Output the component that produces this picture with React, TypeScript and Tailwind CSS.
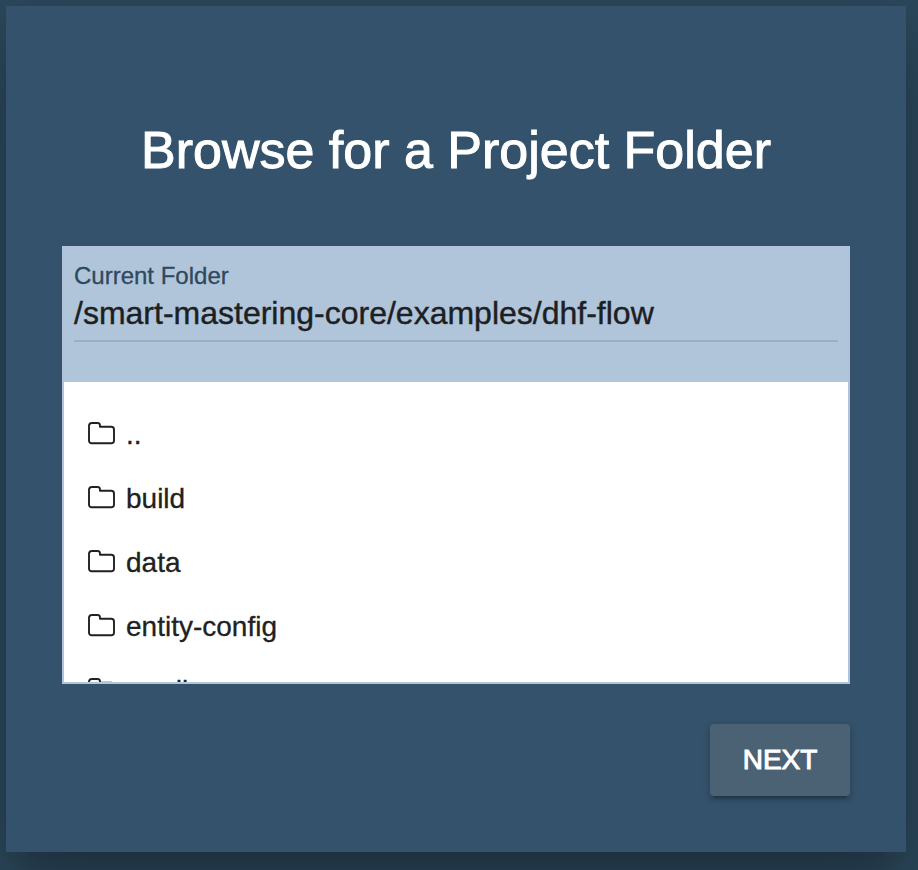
const folders = ['..', 'build', 'data', 'entity-config', 'gradle'];

function FolderIcon() {
  return (
    <svg width="28" height="24" viewBox="0 0 28 24" fill="none" stroke="#212121" strokeWidth="1.9" className="mb-0.5 shrink-0" aria-hidden="true">
      <path d="M1 19V4.8Q1 2 3.8 2H9.4Q12 2 12 4.4V5.8H23.2Q26 5.8 26 8.6V19.4Q26 22.2 23.2 22.2H3.8Q1 22.2 1 19.4Z" strokeLinejoin="round" />
    </svg>
  );
}

export default function App() {
  return (
    <div className="h-[870px] w-[918px] overflow-hidden bg-[#2d495d] pt-1.5 pl-1.5 font-['Liberation_Sans',Arial,sans-serif]">
      <main className="flex h-[846px] w-[900px] flex-col bg-[#34526b] px-14 shadow-[0_22px_30px_-14px_rgba(0,0,0,0.2),0_48px_76px_6px_rgba(0,0,0,0.14),0_18px_92px_16px_rgba(0,0,0,0.12)]">
        <h1 className="mt-[114px] h-[60px] text-center text-[52px] leading-[60px] whitespace-nowrap text-white [-webkit-text-stroke:1px_white]">
          Browse for a Project Folder
        </h1>
        <section className="mt-[66px] flex h-[438px] flex-col border-2 border-[#b0c5d9] bg-white">
          <div className="h-[134px] shrink-0 bg-[#b0c5d9] px-2.5 pt-3">
            <label className="block h-8 text-[24px] leading-8 text-[#2f485e] [-webkit-text-stroke:0.3px_#2f485e]">Current Folder</label>
            <div className="mt-0.5 h-[48px] border-b-2 border-[#9aafbf] text-[32px] leading-[38px] whitespace-nowrap text-[#1d2023] [-webkit-text-stroke:0.4px_#1d2023]">
              /smart-mastering-core/examples/dhf-flow
            </div>
          </div>
          <ul className="flex-1 overflow-hidden pt-5 pl-6">
            {folders.map((name) => (
              <li key={name} className="flex h-16 items-center gap-2.5 text-[28px] leading-8 text-[#212121] [-webkit-text-stroke:0.3px_#212121]">
                <FolderIcon />
                <span className="pt-0.5">{name}</span>
              </li>
            ))}
          </ul>
        </section>
        <button className="mt-10 h-[72px] w-[140px] self-end rounded-[4px] bg-[#4b6174] text-[28px] leading-[72px] font-normal text-white shadow-[0_6px_2px_-4px_rgba(0,0,0,0.2),0_4px_4px_0_rgba(0,0,0,0.14),0_2px_10px_0_rgba(0,0,0,0.12)] [-webkit-text-stroke:1px_white]">
          NEXT
        </button>
      </main>
    </div>
  );
}
